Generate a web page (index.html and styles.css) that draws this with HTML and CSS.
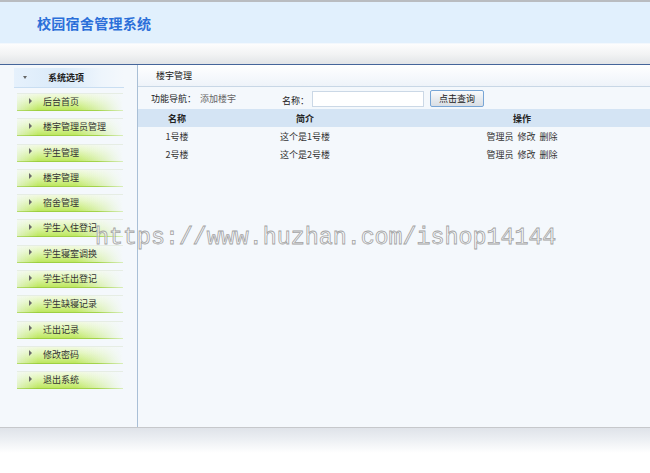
FILE: index.html
```html
<!DOCTYPE html>
<html lang="zh">
<head>
<meta charset="utf-8">
<title>校园宿舍管理系统</title>
<link rel="stylesheet" href="styles.css">
</head>
<body>
<div class="page">
  <header class="top">
    <h1 class="title">校园宿舍管理系统</h1>
  </header>
  <div class="toolbar"></div>
  <div class="frame">
    <aside class="side">
      <div class="side-head"><span class="down"></span><span class="side-title">系统选项</span></div>
      <ul class="menu">
        <li class="item"><div class="bar"><span class="arrow"></span>后台首页</div></li>
        <li class="item"><div class="bar"><span class="arrow"></span>楼宇管理员管理</div></li>
        <li class="item"><div class="bar"><span class="arrow"></span>学生管理</div></li>
        <li class="item"><div class="bar"><span class="arrow"></span>楼宇管理</div></li>
        <li class="item"><div class="bar"><span class="arrow"></span>宿舍管理</div></li>
        <li class="item"><div class="bar"><span class="arrow"></span>学生入住登记</div></li>
        <li class="item"><div class="bar"><span class="arrow"></span>学生寝室调换</div></li>
        <li class="item"><div class="bar"><span class="arrow"></span>学生迁出登记</div></li>
        <li class="item"><div class="bar"><span class="arrow"></span>学生缺寝记录</div></li>
        <li class="item"><div class="bar"><span class="arrow"></span>迁出记录</div></li>
        <li class="item"><div class="bar"><span class="arrow"></span>修改密码</div></li>
        <li class="item"><div class="bar"><span class="arrow"></span>退出系统</div></li>
      </ul>
    </aside>
    <main class="main">
      <div class="main-head">楼宇管理</div>
      <div class="search">
        <span class="nav-label">功能导航：</span>
        <span class="nav-link">添加楼宇</span>
        <span class="name-label">名称：</span>
        <input class="name-input" type="text">
        <button class="btn" type="button">点击查询</button>
      </div>
      <table class="grid">
        <colgroup><col class="c1"><col class="c2"><col class="c3"></colgroup>
        <thead>
          <tr><th>名称</th><th>简介</th><th>操作</th></tr>
        </thead>
        <tbody>
          <tr><td>1号楼</td><td>这个是1号楼</td><td>管理员&nbsp; 修改&nbsp; 删除</td></tr>
          <tr><td>2号楼</td><td>这个是2号楼</td><td>管理员&nbsp; 修改&nbsp; 删除</td></tr>
        </tbody>
      </table>
    </main>
  </div>
  <div class="foot"></div>
  <div class="watermark">https://www.huzhan.com/ishop14144</div>
</div>
</body>
</html>
```

FILE: styles.css
```css
* { box-sizing: border-box; }
html, body { margin: 0; padding: 0; background: #ffffff; }
body {
  font-family: "Noto Sans CJK SC", "Noto Sans", sans-serif;
  font-size: 9px;
  color: #222;
}
.page { position: relative; width: 650px; height: 473px; overflow: hidden; }

.top {
  height: 44px;
  border-top: 2px solid #b9bcc0;
  border-bottom: 1px solid #f3f8fd;
  background: #e1f0fd;
  display: flex;
  align-items: center;
  padding-left: 37px;
}
.title {
  margin: 0;
  font-size: 14px;
  font-weight: bold;
  letter-spacing: 0.3px;
  color: #2b6fd9;
  line-height: 1;
}
.toolbar {
  height: 21px;
  background: linear-gradient(to bottom, #fdfdfd 0%, #f2f3f4 50%, #e2e4e7 100%);
  border-bottom: 1px solid #45659a;
}

.frame {
  display: grid;
  grid-template-columns: 138px 1fr;
  height: 362px;
  background: #f4f8fc;
}
.side {
  border-right: 1px solid #a9bfd6;
  padding-top: 3px;
}
.side-head {
  margin-left: 14px;
  width: 110px;
  height: 20px;
  border-bottom: 1px solid #c9def2;
  background: linear-gradient(to right, #e6f1fc 0%, #d9eaf9 45%, #eef5fc 80%, #f4f8fc 100%);
  display: flex;
  align-items: center;
}
.down {
  width: 0; height: 0;
  margin-left: 9px;
  border-left: 2.5px solid transparent;
  border-right: 2.5px solid transparent;
  border-top: 3px solid #666;
}
.side-title {
  font-weight: bold;
  color: #222;
  margin-left: 21px;
}
.menu { list-style: none; margin: 1px 0 0; padding: 0; }
.item {
  height: 25.3px;
  padding-top: 4px;
  padding-left: 17px;
}
.bar {
  width: 106px;
  height: 18px;
  border-top: 1px solid #e9efe8;
  border-bottom: 1px solid transparent;
  border-image: linear-gradient(to right, #b5dc70 0%, #9ccf3e 20%, #a3d44a 75%, #dcefc0 100%) 1;
  border-top-width: 0;
  box-shadow: inset 0 1px 0 #e6ede4;
  background:
    linear-gradient(to right, rgba(244,248,252,0.6) 0%, rgba(244,248,252,0) 20%, rgba(244,248,252,0) 55%, rgba(244,248,252,0.85) 92%, rgba(244,248,252,1) 100%),
    linear-gradient(to bottom, #f4fae8 0%, #e2f6b8 40%, #caed7c 80%, #bde65f 100%);
  display: flex;
  align-items: center;
  padding-left: 12px;
  color: #333;
}
.arrow {
  width: 0; height: 0;
  border-top: 3px solid transparent;
  border-bottom: 3px solid transparent;
  border-left: 3.5px solid #6a6a6a;
  margin-right: 11px;
  margin-top: -2px;
}

.main { min-width: 0; }
.main-head {
  height: 22px;
  border-bottom: 1px solid #c8d7e6;
  background: linear-gradient(to bottom, #ffffff 0%, #f5f8fc 60%, #eef3f9 100%);
  display: flex;
  align-items: center;
  padding-left: 18px;
  padding-bottom: 1px;
}
.search {
  height: 22px;
  display: flex;
  align-items: center;
  padding-left: 13px;
}
.nav-label { color: #222; }
.nav-link { color: #666; margin-left: 4px; }
.name-label { margin-left: 46px; padding-top: 4px; color: #222; }
.name-input {
  margin: 1px 0 0 3px;
  width: 112px;
  height: 16px;
  border: 1px solid #cbd8e6;
  background: #fff;
  padding: 0;
}
.btn {
  margin-left: 6px;
  width: 54px;
  height: 17px;
  padding: 0;
  border: 1px solid #78a6d6;
  border-radius: 2px;
  background: linear-gradient(to bottom, #fafbfc 0%, #e8ecf0 50%, #d9dee4 100%);
  font-family: "Noto Sans CJK SC", "Noto Sans", sans-serif;
  font-size: 9px;
  color: #222;
  line-height: 1;
}
.grid {
  width: 100%;
  border-collapse: collapse;
  table-layout: fixed;
}
.c1 { width: 78px; }
.c2 { width: 178px; }
.c3 { width: auto; }
.grid th {
  height: 18px;
  background: #d4e4f4;
  font-weight: bold;
  text-align: center;
  padding: 0;
  color: #222;
}
.grid td {
  height: 18px;
  text-align: center;
  padding: 0;
  color: #333;
}

.foot {
  height: 26px;
  border-top: 1px solid #c6c8cb;
  background: linear-gradient(to bottom, #dfe3e9 0%, #eceff3 45%, #ffffff 100%);
}

.watermark {
  position: absolute;
  left: 95px;
  top: 224px;
  font-family: "Liberation Mono", "DejaVu Sans Mono", monospace;
  font-size: 23.3px;
  line-height: 28px;
  color: rgba(255,255,255,0.5);
  -webkit-text-stroke: 0.8px #a3a3a3;
  white-space: nowrap;
  pointer-events: none;
}
```
